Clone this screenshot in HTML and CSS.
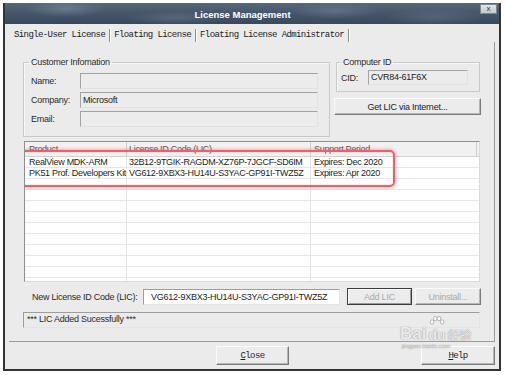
FILE: index.html
```html
<!DOCTYPE html>
<html>
<head>
<meta charset="utf-8">
<title>License Management</title>
<link rel="stylesheet" href="styles.css">
</head>
<body>
<div class="window">
  <div class="titlebar">
    <span class="title">License Management</span>
    <span class="xbtn">x</span>
  </div>
  <div class="tabs">
    <span class="tab">Single-User License</span>
    <span class="tab">Floating License</span>
    <span class="tab">Floating License Administrator</span>
  </div>
  <div class="panel">
    <div class="top">
      <fieldset class="group customer">
        <legend>Customer Infomation</legend>
        <div class="form">
          <span class="lbl">Name:</span><span class="field"></span>
          <span class="lbl">Company:</span><span class="field">Microsoft</span>
          <span class="lbl">Email:</span><span class="field"></span>
        </div>
      </fieldset>
      <div class="rightcol">
        <fieldset class="group cid">
          <legend>Computer ID</legend>
          <div class="cidrow">
            <span class="lbl">CID:</span><span class="field cidfield">CVR84-61F6X</span>
          </div>
        </fieldset>
        <div class="btn getlic">Get LIC via Internet...</div>
      </div>
    </div>
    <div class="list">
      <div class="lrow head"><span>Product</span><span>License ID Code (LIC)</span><span>Support Period</span></div>
      <div class="lrow"><span>RealView MDK-ARM</span><span>32B12-9TGIK-RAGDM-XZ76P-7JGCF-SD6IM</span><span>Expires: Dec 2020</span></div>
      <div class="lrow"><span>PK51 Prof. Developers Kit</span><span>VG612-9XBX3-HU14U-S3YAC-GP91I-TWZ5Z</span><span>Expires: Apr 2020</span></div>
      <div class="lrow"><span></span><span></span><span></span></div>
      <div class="lrow"><span></span><span></span><span></span></div>
      <div class="lrow"><span></span><span></span><span></span></div>
      <div class="lrow"><span></span><span></span><span></span></div>
      <div class="lrow"><span></span><span></span><span></span></div>
      <div class="lrow"><span></span><span></span><span></span></div>
      <div class="lrow"><span></span><span></span><span></span></div>
      <div class="lrow"><span></span><span></span><span></span></div>
      <div class="lrow"><span></span><span></span><span></span></div>
      <div class="lrow"><span></span><span></span><span></span></div>
      <div class="highlight"></div>
    </div>
    <div class="newrow">
      <span class="newlbl">New License ID Code (LIC):</span>
      <span class="field white">VG612-9XBX3-HU14U-S3YAC-GP91I-TWZ5Z</span>
      <div class="btn default disabled addlic">Add LIC</div>
      <div class="btn disabled uninst">Uninstall...</div>
    </div>
    <div class="status">*** LIC Added Sucessfully ***</div>
  </div>
  <div class="footer">
    <div class="btn mono closebtn"><u>C</u>lose</div>
    <div class="btn mono helpbtn"><u>H</u>elp</div>
  </div>
  <div class="watermark">
    <div class="wm-line">
      <span class="wm-bai">Bai</span>
      <span class="wm-du">
        <svg class="paw" width="16" height="12" viewBox="0 0 16 12">
          <ellipse cx="3" cy="6" rx="1.8" ry="2.2"/>
          <ellipse cx="6.3" cy="2.6" rx="1.8" ry="2.2"/>
          <ellipse cx="10" cy="2.6" rx="1.8" ry="2.2"/>
          <ellipse cx="13.2" cy="6" rx="1.8" ry="2.2"/>
        </svg>
        <span class="wm-dutext">du</span>
      </span>
      <span class="wm-jy">经验</span>
    </div>
    <div class="wm-sub">jingyan.baidu.com</div>
  </div>
</div>
</body>
</html>
```

FILE: styles.css
```css
body {
  margin: 0;
  background: #ffffff;
  font-family: "Liberation Sans", Arial, sans-serif;
  font-size: 9px;
  letter-spacing: -0.25px;
  color: #1c1c1c;
}

.window {
  position: relative;
  margin: 3px 0 0 3px;
  width: 498px;
  height: 368px;
  box-sizing: border-box;
  border: 2px solid #343434;
  border-top: 0;
  background: #ebebeb;
  display: flex;
  flex-direction: column;
}

.titlebar {
  flex: none;
  height: 21px;
  display: flex;
  align-items: center;
  color: #ffffff;
  background:
    radial-gradient(ellipse 40px 8px at 60px 6px, rgba(140,155,170,0.45), transparent),
    radial-gradient(ellipse 50px 7px at 170px 15px, rgba(130,145,160,0.35), transparent),
    radial-gradient(ellipse 45px 8px at 330px 8px, rgba(140,155,170,0.35), transparent),
    radial-gradient(ellipse 50px 9px at 430px 14px, rgba(120,135,150,0.35), transparent),
    linear-gradient(180deg, #56687a 0%, #45576a 45%, #38495c 100%);
}

.title {
  flex: 1;
  text-align: center;
  font-weight: bold;
  font-size: 9.5px;
  letter-spacing: 0;
  padding-top: 1px;
}

.xbtn {
  align-self: flex-start;
  margin: 1px 2px 0 0;
  width: 17px;
  height: 10px;
  box-sizing: border-box;
  border: 1px solid #7d8894;
  background: linear-gradient(180deg, #e2e6ea, #c3cad1);
  color: #2d3640;
  font-size: 8px;
  line-height: 8px;
  text-align: center;
  letter-spacing: 0;
}

.tabs {
  flex: none;
  height: 18px;
  display: flex;
  align-items: flex-end;
  padding-left: 5px;
  font-family: "Liberation Mono", "Courier New", monospace;
  font-size: 9px;
  letter-spacing: -0.6px;
  color: #1a1a1a;
}

.tab {
  height: 13px;
  line-height: 12px;
  padding: 0 4px;
  border-right: 1px solid #8e8e8e;
  box-shadow: 1px 0 0 #ffffff;
}

.panel {
  flex: none;
  height: 300px;
  width: 486px;
  margin-left: 4px;
  box-sizing: border-box;
  border-right: 1px solid #9c9c9c;
  border-bottom: 1px solid #9c9c9c;
  padding: 15px 0 0 14px;
}

.top {
  display: grid;
  grid-template-columns: 307px 147px;
  column-gap: 4px;
  align-items: start;
}

fieldset.group {
  margin: 0;
  padding: 0;
  min-width: 0;
  border: 1px solid #c9c9c9;
  box-shadow: inset 1px 1px 0 #f8f8f8;
}

fieldset.group legend {
  padding: 0 2px;
  margin-left: 5px;
  line-height: 10px;
  color: #2a2a2a;
}

.form {
  display: grid;
  grid-template-columns: 49px 238px;
  row-gap: 3px;
  align-items: center;
  padding: 6px 11px 9px 7px;
}

.lbl {
  color: #2a2a2a;
}

.field {
  display: block;
  height: 16px;
  box-sizing: border-box;
  border: 1px solid;
  border-color: #a3a3a3 #e2e2e2 #e2e2e2 #a3a3a3;
  background: #ececec;
  padding: 0 2px;
  line-height: 14px;
  white-space: nowrap;
  overflow: hidden;
}

.rightcol {
  display: flex;
  flex-direction: column;
}

fieldset.cid {
  margin: 0 1px 0 2px;
}

fieldset.cid legend {
  margin-left: 4px;
}

.cidrow {
  display: grid;
  grid-template-columns: 27px 100px;
  align-items: center;
  padding: 3px 0 6px 4px;
}

.cidfield {
  height: 15px;
  line-height: 13px;
}

.btn {
  box-sizing: border-box;
  display: flex;
  align-items: center;
  justify-content: center;
  border: 1px solid;
  border-color: #fbfbfb #7c7c7c #7c7c7c #fbfbfb;
  box-shadow: inset -1px -1px 0 #b5b5b5;
  background: #ececec;
  color: #1c1c1c;
  white-space: nowrap;
}

.getlic {
  margin-top: 6px;
  height: 17px;
  width: 147px;
}

.list {
  position: relative;
  margin: 4px 0 0 1px;
  width: 456px;
  height: 141px;
  box-sizing: border-box;
  border: 1px solid;
  border-color: #8f8f8f #d9d9d9 #d9d9d9 #8f8f8f;
  background: #ffffff;
  overflow: hidden;
}

.lrow {
  display: grid;
  grid-template-columns: 102px 184px 1fr;
  height: 11px;
  box-sizing: border-box;
  border-bottom: 1px solid #e6e6e6;
  line-height: 10px;
}

.lrow span {
  border-right: 1px solid #e6e6e6;
  padding-left: 2px;
  white-space: nowrap;
  overflow: hidden;
  letter-spacing: -0.3px;
}

.lrow span:first-child {
  padding-left: 4px;
}

.lrow span:nth-child(3) {
  padding-left: 3px;
  border-right: 0;
}

.lrow.head {
  height: 15px;
  line-height: 14px;
  background: #f1f1f1;
  border-bottom: 1px solid #d2d2d2;
  color: #555555;
}

.lrow.head span {
  border-right: 1px solid #cfcfcf;
}

.lrow.head span:nth-child(3) {
  margin-right: 2px;
  border-right: 1px solid #cfcfcf;
}

.highlight {
  position: absolute;
  left: -4px;
  top: 8px;
  width: 374px;
  height: 37px;
  box-sizing: border-box;
  border: 2.5px solid #ec5f6d;
  border-radius: 5px;
  box-shadow: 0 0 3px 1px rgba(236, 95, 109, 0.45), inset 0 0 2px rgba(236, 95, 109, 0.4);
}

.newrow {
  display: flex;
  align-items: center;
  height: 17px;
  margin-top: 6px;
}

.newlbl {
  width: 120px;
  box-sizing: border-box;
  padding-left: 9px;
  color: #2a2a2a;
}

.field.white {
  width: 197px;
  background: #ffffff;
  padding-left: 7px;
  border-color: #9d9d9d #e4e4e4 #e4e4e4 #9d9d9d;
}

.btn.disabled {
  color: #a9a9a9;
}

.btn.default {
  border: 1px solid #3c3c3c;
  box-shadow: inset 1px 1px 0 #fafafa, inset -1px -1px 0 #9a9a9a;
}

.addlic {
  width: 65px;
  height: 17px;
  margin-left: 7px;
}

.uninst {
  width: 66px;
  height: 17px;
  margin-left: 3px;
}

.status {
  margin-top: 7px;
  width: 457px;
  height: 16px;
  box-sizing: border-box;
  border: 1px solid;
  border-color: #9d9d9d #e4e4e4 #e4e4e4 #9d9d9d;
  padding-left: 3px;
  line-height: 13px;
  color: #2a2a2a;
}

.footer {
  flex: none;
  height: 27px;
  box-sizing: border-box;
  padding-top: 4px;
  display: flex;
  align-items: flex-start;
}

.mono {
  font-family: "Liberation Mono", "Courier New", monospace;
  letter-spacing: -0.6px;
}

.closebtn {
  margin-left: 211px;
  width: 73px;
  height: 19px;
}

.helpbtn {
  margin-left: auto;
  margin-right: 4px;
  width: 74px;
  height: 19px;
}

.watermark {
  position: absolute;
  left: 395px;
  top: 309px;
  width: 90px;
  color: rgba(255, 255, 255, 0.85);
  text-shadow: 0 0 1px rgba(120, 120, 120, 0.8), 0 0 1px rgba(120, 120, 120, 0.6);
  pointer-events: none;
}

.wm-line {
  display: flex;
  align-items: flex-end;
  height: 30px;
}

.wm-bai {
  font-size: 17px;
  line-height: 17px;
  font-weight: bold;
  letter-spacing: 0;
}

.wm-du {
  display: flex;
  flex-direction: column;
  align-items: center;
  margin-left: 2px;
}

.paw ellipse {
  fill: rgba(255, 255, 255, 0.85);
  stroke: rgba(120, 120, 120, 0.7);
  stroke-width: 0.7;
}

.wm-dutext {
  font-size: 14px;
  line-height: 14px;
  font-weight: bold;
  letter-spacing: 0;
}

.wm-jy {
  margin-left: 2px;
  font-family: "Noto Sans CJK SC", sans-serif;
  font-size: 12px;
  line-height: 15px;
  letter-spacing: 0;
}

.wm-sub {
  margin-top: 1px;
  margin-left: 2px;
  font-size: 6px;
  line-height: 7px;
  letter-spacing: 0;
  color: rgba(255, 255, 255, 0.7);
}
```
